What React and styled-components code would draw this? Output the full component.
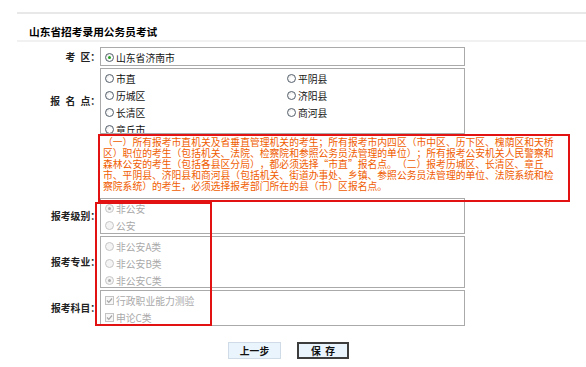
import React from "react";
import styled, { createGlobalStyle } from "styled-components";

const GlobalStyle = createGlobalStyle`
  html, body {
    margin: 0;
    padding: 0;
    background: #fff;
  }
  body {
    font-family: "Noto Sans CJK SC", "Noto Sans", sans-serif;
    font-size: 9.8px;
    color: #111;
    text-spacing-trim: space-all;
  }
`;

const Page = styled.div`
  position: relative;
  width: 586px;
  height: 367px;
  overflow: hidden;
`;

const Header = styled.div`
  margin: 12px 0 0 17px;
  height: 26px;
  box-sizing: content-box;
  border-top: 2px solid #e8e8e8;
  border-bottom: 2px solid #f1f1f1;
  padding: 0 0 0 12px;
`;

const Title = styled.h1`
  margin: 0;
  padding-top: 11px;
  line-height: 14px;
  font-size: 10.7px;
  font-weight: bold;
  color: #000;
`;

const Form = styled.div`
  display: grid;
  grid-template-columns: 83px 365px;
  row-gap: 2px;
  margin: 5px 0 0 17px;
`;

const Label = styled.div`
  display: flex;
  align-items: center;
  justify-content: flex-end;
  font-weight: bold;
  color: #222;
  white-space: pre;
  word-spacing: 3px;
`;

const Box = styled.div`
  box-sizing: border-box;
  height: ${(p) => p.$h}px;
  border: 1px solid #aaa;
  padding: 1px 0 0 4px;
  overflow: hidden;
`;

const Note = styled.div`
  grid-column: 2;
  height: 59px;
  padding: 1px 0 0 3px;
  color: #f05c00;
  line-height: 11px;
  white-space: nowrap;
`;

const Options = styled.div`
  display: grid;
  grid-template-columns: ${(p) => (p.$cols > 1 ? "182px 182px" : "1fr")};
`;

const Option = styled.div`
  display: flex;
  align-items: center;
  height: 17px;
  white-space: nowrap;
  color: ${(p) => (p.$disabled ? "#a9a9a9" : "#111")};
`;

const RadioMark = styled.span`
  position: relative;
  flex: none;
  width: 9px;
  height: 9px;
  box-sizing: border-box;
  margin-right: 2px;
  border-radius: 50%;
  border: 1px solid ${(p) => (p.$disabled ? "#c6c6c6" : "#56616d")};
  background: ${(p) =>
    p.$disabled ? "#f4f4f4" : "radial-gradient(circle at 60% 60%, #fff 30%, #dcdcdc)"};

  &::after {
    content: "";
    display: ${(p) => (p.$checked ? "block" : "none")};
    position: absolute;
    left: 2px;
    top: 2px;
    width: 3px;
    height: 3px;
    border-radius: 50%;
    background: ${(p) => (p.$disabled ? "#adadad" : "#25a025")};
  }
`;

const CheckMark = styled.span`
  flex: none;
  width: 9px;
  height: 9px;
  box-sizing: border-box;
  margin-right: 2px;
  border: 1px solid #c3c3c3;
  background: #f7f7f7;
  display: flex;

  svg {
    width: 7px;
    height: 7px;
  }
`;

const RedFrame = styled.div`
  position: absolute;
  left: ${(p) => p.$x}px;
  top: ${(p) => p.$y}px;
  width: ${(p) => p.$w}px;
  height: ${(p) => p.$h}px;
  box-sizing: border-box;
  border: 2px solid #e31212;
  pointer-events: none;
`;

const Actions = styled.div`
  display: flex;
  gap: 16px;
  padding-left: 228px;
  margin-top: 16px;
`;

const Button = styled.button`
  width: ${(p) => (p.$primary ? 52 : 53)}px;
  height: 17px;
  box-sizing: border-box;
  padding: 0;
  background: #eaf4fc;
  border: ${(p) => (p.$primary ? "2px solid #3d3d3d" : "1px solid #cfdbe6")};
  font-family: "Noto Sans CJK SC", sans-serif;
  font-size: 9.8px;
  font-weight: bold;
  color: #111;
  white-space: pre;
`;

const Radio = ({ children, checked, disabled }) => (
  <Option $disabled={disabled}>
    <RadioMark $checked={checked} $disabled={disabled} />
    {children}
  </Option>
);

const Check = ({ children }) => (
  <Option $disabled>
    <CheckMark>
      <svg viewBox="0 0 7 7">
        <path d="M1 3.5 L2.8 5.3 L6 1.5" fill="none" stroke="#a6a6a6" strokeWidth="1.2" />
      </svg>
    </CheckMark>
    {children}
  </Option>
);

const points = ["市直", "平阴县", "历城区", "济阳县", "长清区", "商河县", "章丘市"];

const noteLines = [
  "（一）所有报考市直机关及省垂直管理机关的考生；所有报考市内四区（市中区、历下区、槐荫区和天桥",
  "区）职位的考生（包括机关、法院、检察院和参照公务员法管理的单位）；所有报考公安机关人民警察和",
  "森林公安的考生（包括各县区分局），都必须选择“市直”报名点。（二）报考历城区、长清区、章丘",
  "市、平阴县、济阳县和商河县（包括机关、街道办事处、乡镇、参照公务员法管理的单位、法院系统和检",
  "察院系统）的考生，必须选择报考部门所在的县（市）区报名点。",
];

export default function App() {
  return (
    <Page>
      <GlobalStyle />
      <Header>
        <Title>山东省招考录用公务员考试</Title>
      </Header>

      <Form>
        <Label>考 区：</Label>
        <Box $h={19}>
          <Radio checked>山东省济南市</Radio>
        </Box>

        <Label>报 名 点：</Label>
        <Box $h={66}>
          <Options $cols={2}>
            {points.map((p) => (
              <Radio key={p}>{p}</Radio>
            ))}
          </Options>
        </Box>

        <Note>
          {noteLines.map((l) => (
            <div key={l}>{l}</div>
          ))}
        </Note>

        <Label>报考级别：</Label>
        <Box $h={36}>
          <Radio checked disabled>非公安</Radio>
          <Radio disabled>公安</Radio>
        </Box>

        <Label>报考专业：</Label>
        <Box $h={52}>
          <Radio disabled>非公安A类</Radio>
          <Radio disabled>非公安B类</Radio>
          <Radio checked disabled>非公安C类</Radio>
        </Box>

        <Label>报考科目：</Label>
        <Box $h={36}>
          <Check>行政职业能力测验</Check>
          <Check>申论C类</Check>
        </Box>
      </Form>

      <Actions>
        <Button>上一步</Button>
        <Button $primary>保  存</Button>
      </Actions>

      <RedFrame $x={98} $y={134} $w={472} $h={68} />
      <RedFrame $x={95} $y={202} $w={117} $h={124} />
    </Page>
  );
}
